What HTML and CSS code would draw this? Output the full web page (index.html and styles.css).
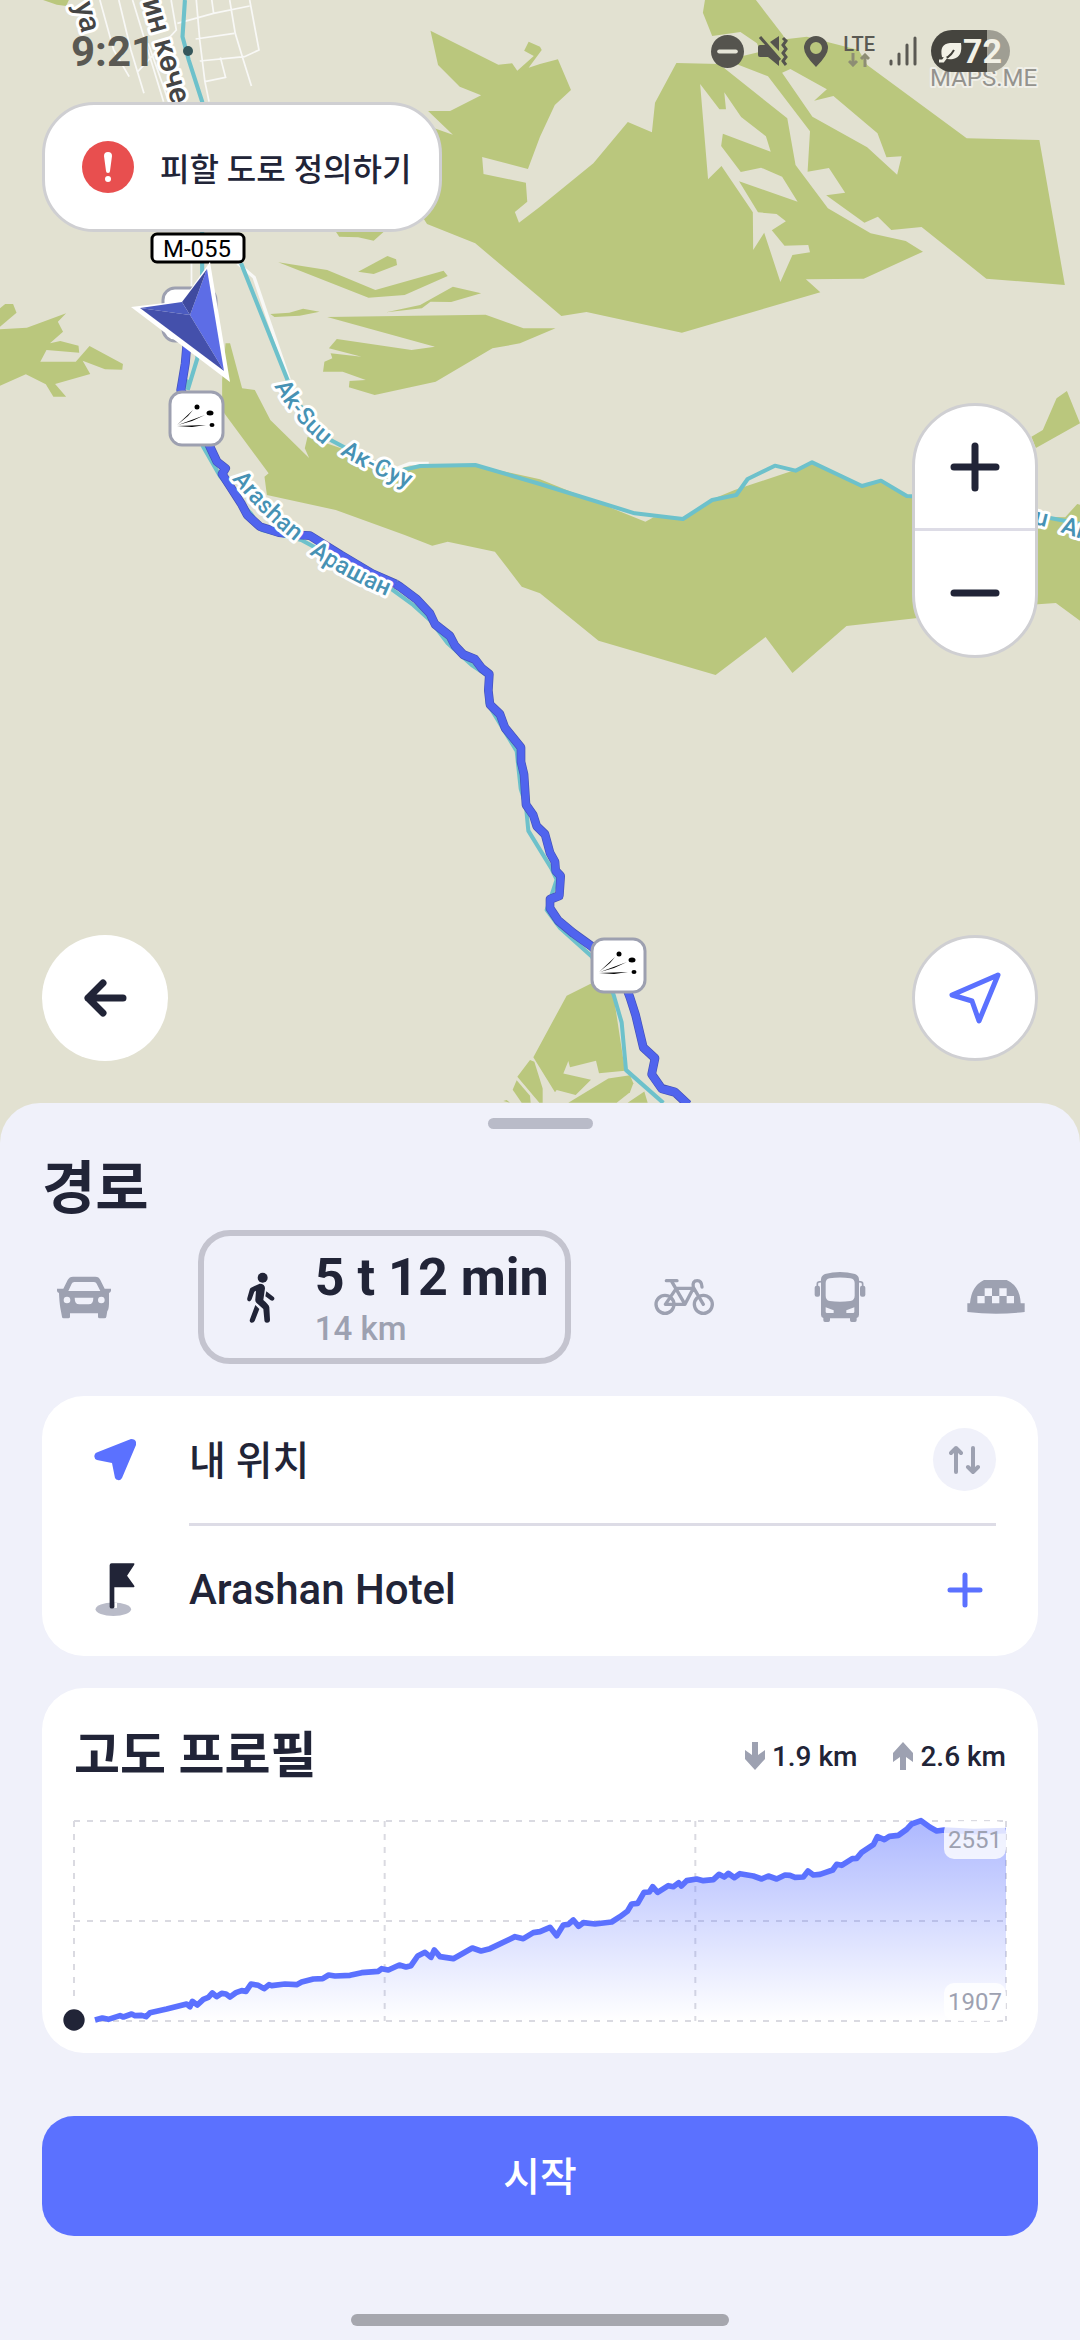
FILE: index.html
```html
<!DOCTYPE html>
<html lang="ko">
<head>
  <meta charset="UTF-8" />
  <meta name="viewport" content="width=device-width, initial-scale=1.0"/>
  <title>경로</title>
  <link rel="stylesheet" href="styles.css">
</head>
<body>
  <main class="map">
    <svg class="map-canvas" viewBox="0 0 1080 1143" preserveAspectRatio="xMidYMin slice" aria-hidden="true">
      <!-- north: forests, streets, rivers -->
      <svg class="tile" x="0" y="0" width="540" height="420" viewBox="0 0 1568 1260" preserveAspectRatio="none">
        <g class="forest">
          <path d="M125 0H200L192 18L165 14Z"/>
          <path d="M1250 92L1447 194L1487 190L1502 212L1550 168L1522 152L1535 125L1568 140L1573 150L1535 203L1568 192L1620 178L1658 270L1611 315L1568 410L1533 507L1400 471L1404 522L1527 548L1531 605L1495 636L1507 668L1568 620L1723 490L1823 366L1893 397L1902 308L1964 189L2088 192L2286 355L2310 495L2404 625L2528 700L2630 723L2680 755L2508 836L2340 838L2382 877L1980 998L1703 936L1630 948L1568 893L1380 730L1240 672L1220 640V370L1315 404L1243 333H1307L1397 286L1335 260L1272 195Z"/>
          <path d="M950 951L1410 944L1520 985H1613L1510 1030L1430 1045L1265 1145L1088 1185L1013 1162L1015 1143L1062 1140L995 1115H938L942 1085L965 1075L960 1060L1050 1070L955 1045L978 1017L1195 1050L1263 1040Z"/>
          <path d="M808 787L950 810L1090 870L1288 812L1300 828L1175 885L1070 893Z"/>
          <path d="M1040 815L1125 768L1150 778L1153 795L1085 822Z"/>
          <path d="M972 690H1120L1085 722L1040 712L985 710Z"/>
          <path d="M1122 937L1220 915L1315 860L1397 880L1310 906L1250 905L1225 925Z"/>
          <path d="M785 942L840 938L880 926L928 935L870 947L797 951Z"/>
          <path d="M0 925L15 912H38L48 938L0 980Z"/>
          <path d="M0 988L78 983L192 940L168 965L183 995L145 1030L175 1023L228 1037L230 1058L135 1050L117 1085H220L260 1038L357 1092L355 1109L305 1108L240 1082L262 1122L160 1152L192 1190H155L133 1153L75 1123L0 1157Z"/>
        </g>
        <g class="street">
          <path d="M290 0L330 150L375 230M345 0L380 150L418 280M385 0L475 305M430 130L490 305M497 0L512 90L400 215M570 0L580 120L595 245L607 305M515 70L620 40L725 18M615 0L620 38M667 0L683 100L705 175L730 258M725 0L752 150L710 170L580 183M568 117L680 100M640 172L655 232L595 245M556 790V870"/>
          <path class="road" d="M690 790L738 832L775 945L840 1140"/>
        </g>
        <path class="river" d="M537 0L530 110L548 180L587 305V830L573 1075L545 1170M700 790L835 1140"/>
      </svg>
      <svg class="tile" x="540" y="0" width="540" height="420" viewBox="0 0 1568 1260" preserveAspectRatio="none">
        <path class="forest" d="M479 0H627L705 105L712 118L775 110L925 150L950 195L1239 415L1450 420L1524 855L1296 836L1108 681L1020 690L981 650L942 668L831 586L886 578L839 504L777 515L784 394L662 229L540 180L640 155L630 130L582 96L500 108L473 38Z"/>
        <path class="land" d="M465 252L521 328H540L535 277L584 351L656 409L670 455L531 401L526 438L583 516L642 503L703 530L748 605L578 544L633 637L687 642L714 664L673 691L710 737L779 735L784 757L733 765L698 846L651 698L619 750L618 637L527 498L488 538Z"/>
        <path class="land" d="M703 218L727 207L833 268L796 302L852 288L980 400L1006 472L1050 469L1037 524L950 442L791 350Z"/>
      </svg>

      <!-- middle: Ak-Suu valley -->
      <svg class="tile" x="0" y="380" width="540" height="380" viewBox="0 0 1568 1140" preserveAspectRatio="none">
        <path class="forest" d="M655 -110H668L703 25L740 30L785 120L910 247L962 268L908 258L885 205L893 170L990 205L1120 262L1378 255L1568 298L1874 425L1898 412L1983 415L2068 358L2133 330L2308 270L2358 250L2503 318L2558 305L2633 350L3018 410L3093 412L3128 372L3140 375V725L3066 669L3014 673L2658 715L2458 738L2301 879L2223 771L2078 885L1738 782L1568 640L1515 620L1437 515L1300 485L1255 497L1175 465L975 390L775 345L768 290L780 280L655 105L645 90V0Z"/>
        <path class="forest" d="M3098 33L3136 130L3008 204L2995 170L3028 150L3068 55Z"/>
        <path class="road" d="M1140 270L1190 250H1245"/>
        <path class="river" d="M835 0L870 75L960 180L1060 235L1150 275L1220 258L1380 255L1568 312L1843 400L1983 417L2068 360L2138 345L2171 297L2250 257L2310 272L2358 247L2503 318L2558 302L2633 348L2868 360L3038 412L3140 432"/>
        <path class="river" d="M548 0L525 40L590 200L640 290L700 370L728 400L760 450L830 468L875 480L1130 622L1200 675L1250 722L1300 790L1370 855L1420 890"/>
      </svg>

      <!-- south: Arashan gorge -->
      <svg class="tile" x="400" y="560" width="400" height="560" viewBox="0 0 1200 1568" preserveAspectRatio="none">
        <g class="forest">
          <path d="M575 1185L500 1220L400 1392L465 1490L470 1484L527 1498L573 1455L490 1438L505 1403L510 1420L588 1402L597 1437L675 1430L640 1215Z"/>
          <path d="M505 1520L625 1452L690 1443L700 1465L690 1490L650 1520Z"/>
          <path d="M390 1400L403 1405L418 1450L428 1480V1520H418L352 1447Z"/>
          <path d="M350 1457L390 1500L392 1520H365L338 1483Z"/>
          <path d="M683 1520L733 1488L743 1520ZM310 1515L320 1512L330 1520Z"/>
        </g>
        <path class="river" d="M262 330V400L350 535L362 640L378 690L385 758L455 865L470 895L440 980L480 1030L575 1110L640 1215L665 1295L678 1428L790 1520"/>
      </svg>

      <!-- walking route -->
      <g class="route">
        <svg class="tile" x="0" y="380" width="540" height="380" viewBox="0 0 1568 1140" preserveAspectRatio="none">
          <path class="edge" d="M543 -110L538 -50L530 0L525 30L605 190L630 245L655 265L645 282L700 370L718 405L755 440L810 458L870 465L900 467L990 525L1080 580L1150 612"/>
          <path d="M543 -110L538 -50L530 0L525 30L605 190L630 245L655 265L645 282L700 370L718 405L755 440L810 458L870 465L900 467L990 525L1080 580L1150 612"/>
        </svg>
        <svg class="tile" x="400" y="560" width="400" height="560" viewBox="0 0 1200 1568" preserveAspectRatio="none">
          <path class="edge" d="M-12 68L0 75L50 110L90 150L105 180L150 213L165 240L190 265L225 278L245 303L268 320L265 365L270 405L300 432L315 470L363 525V565L372 600L378 685L400 715L410 745L435 768L450 820L465 845L467 870L482 885L478 940L450 950V975L475 1010L520 1045L572 1080L660 1150L690 1225L707 1275L730 1365L765 1395L755 1440L785 1480L825 1490L865 1525"/>
          <path d="M-12 68L0 75L50 110L90 150L105 180L150 213L165 240L190 265L225 278L245 303L268 320L265 365L270 405L300 432L315 470L363 525V565L372 600L378 685L400 715L410 745L435 768L450 820L465 845L467 870L482 885L478 940L450 950V975L475 1010L520 1045L572 1080L660 1150L690 1225L707 1275L730 1365L765 1395L755 1440L785 1480L825 1490L865 1525"/>
        </svg>
      </g>

      <!-- labels -->
      <g class="water-label">
        <path id="akSuu" d="M274 386Q294 422 326 447"/>
        <path id="akSuuKg" d="M340 454Q368 472 408 488"/>
        <path id="arashan" d="M232 479Q258 513 298 544"/>
        <path id="arashanKg" d="M309 554Q347 580 394 599"/>
        <text><textPath href="#akSuu">Ak-Suu</textPath></text>
        <text><textPath href="#akSuuKg">Ак-Суу</textPath></text>
        <text><textPath href="#arashan">Arashan</textPath></text>
        <text><textPath href="#arashanKg">Арашан</textPath></text>
        <text transform="translate(1046 527) rotate(14)" text-anchor="end">Ak-Suu</text>
        <text transform="translate(1060 532) rotate(18)">Ак-Суу</text>
      </g>
      <g class="street-label">
        <text transform="translate(82 34) rotate(75)" text-anchor="end">уа</text>
        <text transform="translate(172 105) rotate(74)" text-anchor="end">ин көче</text>
      </g>
      <text class="watermark" x="930" y="86">MAPS.ME</text>

      <!-- obstacle markers -->
      <defs>
        <g id="marker">
          <rect class="marker-box" x="2" y="2" width="53" height="53" rx="12"/>
          <path d="M9 35L25 20L20 26ZM10 35L37 25L24 31ZM9 36L38 35L24 37Z"/>
          <circle cx="29" cy="17" r="2.5"/>
          <ellipse cx="42" cy="23" rx="3.5" ry="2.5"/>
          <ellipse cx="44" cy="35" rx="2.5" ry="2"/>
        </g>
      </defs>
      <use href="#marker" x="161" y="286"/>
      <use href="#marker" x="168" y="390"/>
      <use href="#marker" x="590" y="937"/>

      <!-- road shield and current position -->
      <rect class="shield" x="152" y="234" width="92" height="28" rx="5"/>
      <text class="shield-text" x="197" y="257">M-055</text>
      <path fill="#fff" d="M210 262L230 382L131 307L182 301Z"/>
      <path fill="#5d6de6" d="M207 269L224 371L190 315Z"/>
      <path fill="#3f4a9f" d="M207 269L190 315L182 302Z"/>
      <path fill="#4b5bc0" d="M140 308L182 302L190 315Z"/>
      <path fill="#4450ab" d="M140 308L190 315L224 371Z"/>
    </svg>

    <div class="map-ui">
      <header class="status-bar">
        <span class="clock">9:21</span>
        <span class="notice-dot"></span>
        <div class="status-icons">
          <svg width="33" height="33" viewBox="0 0 32 32"><circle cx="16" cy="16" r="16"/><path d="M8 16H24" stroke="#e6e5d8" stroke-width="4" stroke-linecap="round"/></svg>
          <svg width="31" height="31" viewBox="0 0 31 31"><path d="M0 11Q0 9 2 9H8L21 22V30L10 21H2Q0 21 0 19ZM12 6L21 0V15Z"/><path d="M2 1L22 24M25 2L28 5L25 9L28 13L25 17L28 21L25 25L28 29" fill="none" stroke="#55544e" stroke-width="3"/></svg>
          <svg width="26" height="31" viewBox="0 0 26 31"><path fill-rule="evenodd" d="M13 31Q1 19 1 12A12 12 0 0 1 25 12Q25 19 13 31ZM13 6A6 6 0 0 0 13 18A6 6 0 0 0 13 6Z"/></svg>
          <div class="network">
            <span>LTE</span>
            <svg width="22" height="14" viewBox="0 0 22 14"><path d="M5 0V12M1 8L5 12L9 8M17 14V2M13 6L17 2L21 6" fill="none" stroke="#8d8d74" stroke-width="3"/></svg>
          </div>
          <svg width="28" height="30" viewBox="0 0 28 30"><path d="M2 25V28M10 18V28M18 9V28M26 2V28" stroke="#5a5953" stroke-width="3" stroke-linecap="round"/></svg>
          <div class="battery">
            <svg width="24" height="24" viewBox="0 0 24 24"><path fill="#f2f1e6" d="M3 18Q0 5 11 4H22Q24 18 14 20Q9 21 7 19Z"/><path d="M1 21Q10 20 15 11" fill="none" stroke="#3f3e38" stroke-width="2"/><path d="M0 22H4L7 18" fill="none" stroke="#f2f1e6" stroke-width="3"/></svg>
            <span>72</span>
          </div>
        </div>
      </header>

      <button class="avoid-button" type="button">
        <svg width="52" height="52" viewBox="0 0 52 52"><circle cx="26" cy="26" r="26" fill="#e84f4f"/><path d="M22 15Q22 11 26 11Q30 11 30 15L28 30Q28 32 26 32Q24 32 24 30Z" fill="#fff"/><circle cx="26" cy="38" r="3" fill="#fff"/></svg>
        피할 도로 정의하기
      </button>

      <div class="zoom">
        <button type="button" aria-label="확대"><svg width="50" height="50" viewBox="0 0 50 50"><path d="M25 4V46M4 25H46"/></svg></button>
        <button type="button" aria-label="축소"><svg width="50" height="50" viewBox="0 0 50 50"><path d="M4 25H46"/></svg></button>
      </div>

      <div class="map-actions">
        <button class="round-button" type="button" aria-label="뒤로"><svg width="44" height="40" viewBox="0 0 44 40"><path d="M5 20H40M20 5L5 20L20 35"/></svg></button>
        <button class="round-button locate" type="button" aria-label="현재 위치"><svg width="56" height="56" viewBox="0 0 56 56"><path d="M51 5L5 25L25 31L32 51Z"/></svg></button>
      </div>
    </div>
  </main>

  <section class="sheet">
    <div class="handle"></div>
    <h1>경로</h1>

    <nav class="modes">
      <button class="mode" type="button" aria-label="자동차">
        <svg width="60" height="48" viewBox="162 1117 180 144"><path fill-rule="evenodd" d="M171 1164H190L203 1138Q208 1128 219 1128H286Q297 1128 301 1138L314 1164H333V1171Q331 1176 327 1177V1210Q326 1228 322 1231L319 1248Q318 1253 313 1253H299Q294 1253 294 1248V1238H210V1248Q210 1253 205 1253H191Q186 1253 186 1248L181 1222Q178 1205 177 1177Q172 1176 171 1171ZM205 1171H301L290 1149Q288 1144 282 1144H223Q217 1144 215 1149ZM201 1188A10 10 0 0 0 201 1208A10 10 0 0 0 201 1188ZM304 1188A10 10 0 0 0 304 1208A10 10 0 0 0 304 1188ZM224 1191H280Q280 1211 266 1211H238Q224 1211 224 1191Z"/></svg>
      </button>
      <button class="mode selected" type="button">
        <svg width="33" height="54" viewBox="193 208 99 162"><circle cx="249" cy="231" r="15"/><path d="M240 249Q256 249 256 263L251 298Q268 312 269 320L271 357Q271 366 262 366Q254 366 254 357L251 325L230 306Q226 302 227 296L229 270L224 273L216 296Q213 303 207 302Q201 300 203 292L210 267Q211 263 214 261ZM260 272L282 289Q286 293 283 297Q279 302 273 299L257 287ZM227 313L239 325L225 361Q222 367 215 366Q208 364 211 356Z"/></svg>
        <span class="mode-info">
          <strong>5 t 12 min</strong>
          <span>14 km</span>
        </span>
      </button>
      <button class="mode" type="button" aria-label="자전거">
        <svg class="bike" width="62" height="42" viewBox="160 230 186 126"><path d="M196 288A27 27 0 0 0 196 342A27 27 0 0 0 196 288M311 288A27 27 0 0 0 311 342A27 27 0 0 0 311 288M197 315L230 267H281L256 315ZM200 244H232M216 246L256 315M311 315L281 264Q277 244 293 244Q306 244 307 263"/></svg>
      </button>
      <button class="mode" type="button" aria-label="대중교통">
        <svg width="52" height="52" viewBox="645 214 156 156"><path fill-rule="evenodd" d="M666 240Q666 228 678 223Q723 211 768 223Q780 228 780 240V345Q780 353 773 355V362Q773 367 768 367H758Q753 367 753 362V356H693V362Q693 367 688 367H678Q673 367 673 362V355Q666 353 666 345ZM680 250Q680 238 692 236Q723 231 754 236Q767 238 767 250V288Q767 301 754 304Q723 309 692 304Q680 301 680 288ZM680 323L704 332V340H684Q680 340 680 336ZM766 323L742 332V340H762Q766 340 766 336Z"/><rect x="647" y="258" width="16" height="33" rx="6"/><rect x="783" y="258" width="16" height="33" rx="6"/><path d="M655 260V252Q655 246 667 246M791 260V252Q791 246 779 246" fill="none" stroke="#9da1b1" stroke-width="5"/></svg>
      </button>
      <button class="mode" type="button" aria-label="택시">
        <svg width="60" height="38" viewBox="1096 236 180 114"><path fill-rule="evenodd" d="M1108 312Q1112 260 1150 242H1218Q1258 260 1260 312H1272V338Q1186 348 1100 338V312ZM1130 290V312H1152V290ZM1174 290V312H1196V290ZM1218 290V312H1240V290ZM1152 267V290H1174V267ZM1196 267V290H1218V267Z"/></svg>
      </button>
    </nav>

    <div class="card route-points">
      <div class="point">
        <span class="point-icon"><svg width="42" height="42" viewBox="0 0 42 42"><path fill="#5b71ff" d="M37 0Q43 0 42 6L28 39Q26 42 24 41Q22 41 21 39L18 24L3 21Q-1 19 1 15Q1 14 4 13Z"/></svg></span>
        <button class="point-name korean" type="button">내 위치</button>
        <button class="swap" type="button" aria-label="출발지와 도착지 바꾸기"><svg width="32" height="30" viewBox="0 0 32 30"><path d="M7 27V3M2 8L7 3L12 8M24 3V27M19 22L24 27L29 22"/></svg></button>
      </div>
      <div class="point">
        <span class="point-icon flag"><svg width="42" height="55" viewBox="268 548 124 164"><ellipse cx="325" cy="689" rx="53" ry="20" fill="#b9bbc8"/><path d="M332 670V685" stroke="#fff" stroke-width="8"/><path fill="#212437" d="M314 558Q314 552 320 552H386Q390 553 387 557L366 589L387 618Q390 623 386 623H328V682Q327 687 321 687Q314 687 314 682Z"/></svg></span>
        <button class="point-name" type="button">Arashan Hotel</button>
        <button class="add" type="button" aria-label="경유지 추가"><svg width="36" height="36" viewBox="0 0 36 36"><path d="M18 3V33M3 18H33"/></svg></button>
      </div>
    </div>

    <div class="card elevation">
      <div class="elevation-head">
        <h2>고도 프로필</h2>
        <span class="stat"><svg width="20" height="28" viewBox="0 0 20 28"><path d="M7 0H13V13L20 8V17L10 28L0 17V8L7 13Z"/></svg>1.9 km</span>
        <span class="stat"><svg width="20" height="28" viewBox="0 0 20 28"><path d="M7 28H13V15L20 20V11L10 0L0 11V20L7 15Z"/></svg>2.6 km</span>
      </div>
      <div class="chart">
        <svg viewBox="0 0 2796 600" aria-hidden="true">
          <defs>
            <linearGradient id="fade" x1="0" y1="0" x2="0" y2="1">
              <stop offset="0" stop-color="#5b71ff" stop-opacity=".5"/>
              <stop offset="1" stop-color="#5b71ff" stop-opacity="0"/>
            </linearGradient>
          </defs>
          <path class="grid-lines" d="M0 0H2796M0 300H2796M0 600H2796M0 0V600M932 0V600M1864 0V600M2796 0V600"/>
          <path id="areaFill" fill="url(#fade)"/>
          <path id="profileLine" class="profile"/>
          <circle cx="0" cy="597" r="60" fill="#fff"/>
          <circle cx="0" cy="597" r="32" fill="#212437"/>
        </svg>
        <div class="chart-labels"><span>2551</span><span>1907</span></div>
      </div>
    </div>

    <button class="start" type="button">시작</button>
    <div class="home-bar"></div>
  </section>

  <script>
    // elevation samples along the route, x y
    const samples = [
      63,597, 85,591, 103,595, 138,584, 148,588, 173,579, 183,584, 203,583, 216,587, 228,575,
      278,564, 338,549, 348,557, 355,541, 370,552, 388,535, 403,529, 415,516, 428,527, 443,517,
      456,519, 468,528, 486,515, 503,509, 516,511, 531,489, 553,493, 570,503, 585,491, 593,494,
      633,489, 668,491, 683,483, 718,474, 746,473, 764,462, 783,465, 828,463, 863,455, 913,451,
      923,443, 943,447, 976,432, 996,438, 1011,434, 1031,405, 1053,394, 1071,409, 1081,387, 1098,407,
      1138,413, 1158,402, 1195,381, 1221,390, 1248,383, 1323,347, 1348,353, 1378,335, 1398,332,
      1428,319, 1448,344, 1468,312, 1483,310, 1498,297, 1514,316, 1528,305, 1563,309, 1613,303,
      1638,287, 1660,271, 1673,249, 1691,247, 1710,214, 1726,213, 1736,197, 1751,214, 1783,194,
      1798,197, 1814,185, 1822,195, 1838,179, 1868,174, 1888,179, 1918,176, 1935,160, 1951,168,
      1963,157, 1981,170, 1998,158, 2038,165, 2063,174, 2083,165, 2108,174, 2133,162, 2148,163,
      2163,169, 2188,168, 2202,150, 2218,162, 2238,160, 2276,147, 2288,130, 2303,133, 2335,113,
      2348,112, 2363,94, 2398,71, 2410,47, 2431,56, 2446,46, 2473,43, 2498,25, 2513,9, 2541,-1,
      2568,19, 2588,30, 2610,27, 2700,32, 2796,29
    ];

    const line = 'M' + samples.join(' ');
    document.getElementById('profileLine').setAttribute('d', line);
    document.getElementById('areaFill').setAttribute('d', line + ' V600 H63 Z');
  </script>
</body>
</html>
```
FILE: styles.css
```css
* {
  box-sizing: border-box;
  margin: 0;
  padding: 0;
}

body {
  font-family: Roboto, "Noto Sans CJK KR", sans-serif;
  min-height: 100vh;
  display: flex;
  flex-direction: column;
  background-color: #f0f1fa;
  color: #212437;
}

button {
  border: none;
  background: none;
  color: inherit;
  font-family: inherit;
  cursor: pointer;
}

svg {
  display: block;
  flex-shrink: 0;
}

/* Map */
.map {
  position: relative;
  flex: 1;
  display: flex;
  min-height: 900px;
  background-color: #e2e1d1;
  overflow: hidden;
}

.map-canvas {
  position: absolute;
  inset: 0;
  width: 100%;
  height: 100%;
}

.tile {
  overflow: visible;
}

.forest {
  fill: #bac77d;
}

.land {
  fill: #e2e1d1;
}

.street path,
.road {
  fill: none;
  stroke: #f8f8f6;
  stroke-width: 5;
}

.street .road,
.road {
  stroke-width: 10;
}

.river {
  fill: none;
  stroke: #6dc1cb;
  stroke-width: 12;
  stroke-linejoin: round;
}

.route path {
  fill: none;
  stroke: #5064ee;
  stroke-width: 22;
  stroke-linejoin: round;
}

.route .edge {
  stroke: #4452b8;
  stroke-width: 26;
}

.water-label path {
  fill: none;
}

.water-label text,
.street-label text,
.watermark {
  font-weight: 500;
  stroke: #fff;
  stroke-width: 6px;
  stroke-linejoin: round;
  paint-order: stroke;
}

.water-label text {
  font-size: 24px;
  fill: #4792b4;
}

.street-label text {
  font-size: 30px;
  fill: #454545;
}

.watermark {
  font-size: 24px;
  font-weight: 400;
  fill: #94938e;
  stroke: #f0efe8;
  stroke-width: 4px;
}

.marker-box {
  fill: #fff;
  stroke: #9da0b0;
  stroke-width: 3;
}

.shield {
  fill: #fff;
  stroke: #000;
  stroke-width: 3;
}

.shield-text {
  font-size: 24px;
  text-anchor: middle;
}

/* Controls on the map */
.map-ui {
  position: relative;
  flex: 1;
  display: flex;
  flex-direction: column;
  padding: 0 42px 82px;
}

.status-bar {
  display: flex;
  align-items: center;
  height: 102px;
  padding: 0 28px 0 29px;
  color: #5a5953;
}

.clock {
  font-size: 42px;
  font-weight: 700;
}

.notice-dot {
  width: 10px;
  height: 10px;
  margin-left: 28px;
  border-radius: 50%;
  background-color: #35565a;
}

.status-icons {
  display: flex;
  align-items: center;
  gap: 14px;
  margin-left: auto;
  fill: #55544e;
}

.network {
  display: flex;
  flex-direction: column;
  align-items: center;
  font-size: 20px;
  font-weight: 500;
  line-height: 18px;
}

.battery {
  display: flex;
  align-items: center;
  justify-content: center;
  width: 79px;
  height: 42px;
  border-radius: 21px;
  background: linear-gradient(to right, #45443e 71%, #9f9e93 71%);
  color: #f2f1e6;
  font-size: 34px;
  font-weight: 700;
}

.avoid-button {
  display: flex;
  align-items: center;
  gap: 26px;
  align-self: flex-start;
  height: 130px;
  padding: 0 28px 0 37px;
  border: 3px solid #cfcfd2;
  border-radius: 52px;
  background-color: #fff;
  font-size: 32px;
  font-weight: 500;
}

.zoom {
  align-self: flex-end;
  width: 126px;
  margin-top: 171px;
  border: 3px solid #cfcfd2;
  border-radius: 63px;
  background-color: #fff;
}

.zoom button {
  display: flex;
  align-items: center;
  justify-content: center;
  width: 100%;
  height: 122px;
}

.zoom button + button {
  height: 127px;
  border-top: 3px solid #dddce6;
}

.zoom path,
.round-button path {
  fill: none;
  stroke: #212437;
  stroke-width: 7;
  stroke-linecap: round;
  stroke-linejoin: round;
}

.map-actions {
  display: flex;
  justify-content: space-between;
  margin-top: auto;
}

.round-button {
  display: flex;
  align-items: center;
  justify-content: center;
  width: 126px;
  height: 126px;
  border-radius: 50%;
  background-color: #fff;
}

.locate {
  border: 3px solid #cfcfd2;
}

.locate path {
  stroke: #5b71ff;
  stroke-width: 5;
}

/* Bottom sheet */
.sheet {
  position: relative;
  display: flex;
  flex-direction: column;
  margin-top: -40px;
  padding: 15px 42px 14px;
  border-radius: 40px 40px 0 0;
  background-color: #f0f1fa;
}

.handle {
  align-self: center;
  width: 105px;
  height: 11px;
  border-radius: 6px;
  background-color: #b9bbc8;
}

h1 {
  margin: 28px 0 9px;
  font-size: 58px;
  line-height: 64px;
}

.modes {
  display: flex;
  align-items: center;
  justify-content: space-between;
}

.mode {
  display: flex;
  align-items: center;
  justify-content: center;
  width: 84px;
  height: 134px;
  fill: #9da1b1;
}

.mode.selected {
  justify-content: flex-start;
  gap: 38px;
  width: auto;
  padding: 0 16px 0 40px;
  border: 6px solid #c4c4cf;
  border-radius: 32px;
  fill: #212437;
}

.bike path {
  fill: none;
  stroke: #9da1b1;
  stroke-width: 10;
  stroke-linecap: round;
  stroke-linejoin: round;
}

.mode-info {
  display: flex;
  flex-direction: column;
  padding-top: 6px;
  text-align: left;
  color: #9da1b1;
  font-size: 33px;
  font-weight: 500;
  line-height: 44px;
}

.mode-info strong {
  color: #212437;
  font-size: 52px;
  font-weight: 700;
  line-height: 58px;
}

.card {
  margin-top: 32px;
  border-radius: 42px;
  background-color: #fff;
}

.route-points {
  padding: 0 42px;
}

.point {
  display: grid;
  grid-template-columns: 62px 1fr 63px;
  column-gap: 43px;
  align-items: center;
  height: 127px;
}

.point + .point {
  position: relative;
  height: 133px;
}

.point + .point::before {
  content: "";
  position: absolute;
  top: 0;
  left: 105px;
  right: 0;
  height: 3px;
  background-color: #dddce6;
}

.point-icon {
  display: flex;
  justify-content: center;
}

.point-name {
  text-align: left;
  font-size: 42px;
  font-weight: 500;
}

.korean {
  font-size: 40px;
  padding-bottom: 4px;
}

.swap,
.add {
  display: flex;
  align-items: center;
  justify-content: center;
  width: 63px;
  height: 63px;
  border-radius: 50%;
}

.swap {
  background-color: #f0f1fa;
}

.swap path,
.add path {
  fill: none;
  stroke: #9da1b1;
  stroke-width: 4;
  stroke-linecap: round;
  stroke-linejoin: round;
}

.add path {
  stroke: #5b71ff;
  stroke-width: 5;
}

.elevation {
  padding: 36px 32px 32px;
}

.elevation-head {
  display: flex;
  align-items: center;
  gap: 36px;
  height: 64px;
  margin-bottom: 33px;
}

h2 {
  margin-right: auto;
  font-size: 50px;
  line-height: 64px;
}

.stat {
  display: flex;
  align-items: center;
  gap: 7px;
  fill: #9da1b1;
  font-size: 28px;
  font-weight: 500;
}

.chart {
  display: grid;
}

.chart svg,
.chart-labels {
  grid-area: 1 / 1;
}

.chart svg {
  width: 100%;
  overflow: visible;
}

.grid-lines {
  fill: none;
  stroke: #dadae1;
  stroke-width: 6;
  stroke-dasharray: 18 21;
}

.profile {
  fill: none;
  stroke: #5b71ff;
  stroke-width: 17;
  stroke-linejoin: round;
}

.chart-labels {
  z-index: 1;
  display: flex;
  flex-direction: column;
  justify-content: space-between;
  align-items: flex-end;
  color: #9da1b1;
  font-size: 24px;
}

.chart-labels span {
  padding: 0 4px;
  border-radius: 10px;
  background-color: rgba(255, 255, 255, 0.8);
  line-height: 38px;
}

.start {
  height: 120px;
  margin-top: 63px;
  padding-bottom: 4px;
  border-radius: 32px;
  background-color: #5b71ff;
  color: #fff;
  font-size: 40px;
  font-weight: 500;
}

.home-bar {
  align-self: center;
  width: 38%;
  height: 12px;
  margin-top: 78px;
  border-radius: 6px;
  background-color: #a6a7ae;
}
```
